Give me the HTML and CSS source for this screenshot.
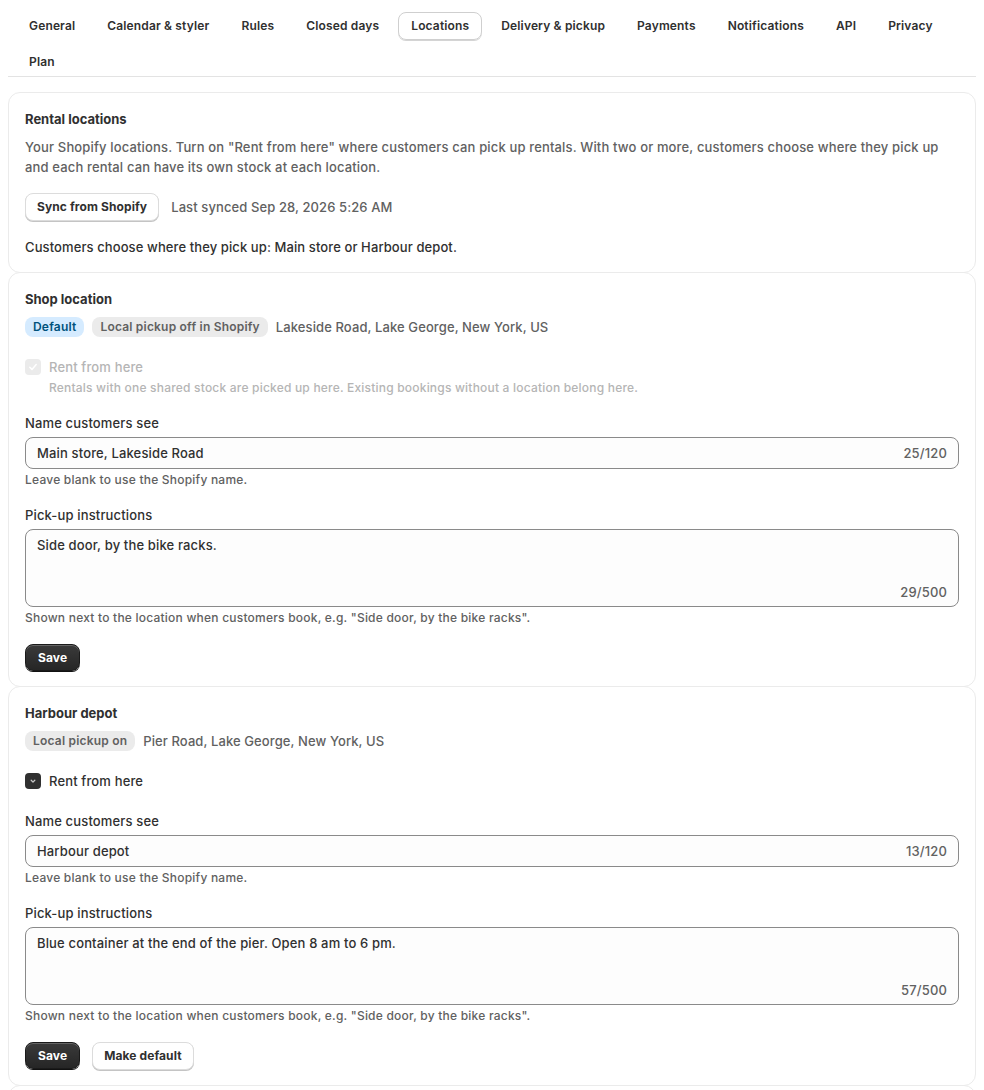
FILE: index.html
```html
<!DOCTYPE html>
<html lang="en">
<head>
<meta charset="utf-8">
<title>Locations</title>
<link rel="stylesheet" href="styles.css">
</head>
<body>
<div class="page">
  <nav class="tabs">
    <span class="tab">General</span>
    <span class="tab">Calendar &amp; styler</span>
    <span class="tab">Rules</span>
    <span class="tab">Closed days</span>
    <span class="tab tab-active">Locations</span>
    <span class="tab">Delivery &amp; pickup</span>
    <span class="tab">Payments</span>
    <span class="tab">Notifications</span>
    <span class="tab">API</span>
    <span class="tab">Privacy</span>
    <span class="tab">Plan</span>
  </nav>

  <div class="cards">
    <section class="card">
      <h2 class="title">Rental locations</h2>
      <p class="desc">Your Shopify locations. Turn on "Rent from here" where customers can pick up rentals. With two or more, customers choose where they pick up and each rental can have its own stock at each location.</p>
      <div class="sync-row">
        <button class="btn">Sync from Shopify</button>
        <span class="muted">Last synced Sep 28, 2026 5:26 AM</span>
      </div>
      <p class="summary">Customers choose where they pick up: Main store or Harbour depot.</p>
    </section>

    <section class="card">
      <h2 class="title">Shop location</h2>
      <div class="badges">
        <span class="badge badge-info">Default</span>
        <span class="badge">Local pickup off in Shopify</span>
        <span class="address">Lakeside Road, Lake George, New York, US</span>
      </div>
      <div class="check check-disabled">
        <span class="box box-disabled">
          <svg width="16" height="16" viewBox="0 0 16 16"><path d="M4.8 8.3l2.2 2.1 4.2-4.8" fill="none" stroke="#fff" stroke-width="1.5" stroke-linecap="round" stroke-linejoin="round"/></svg>
        </span>
        <div class="check-text">
          <span class="check-label">Rent from here</span>
          <span class="check-help">Rentals with one shared stock are picked up here. Existing bookings without a location belong here.</span>
        </div>
      </div>
      <div class="field field-after-help">
        <label class="label">Name customers see</label>
        <div class="input"><span>Main store, Lakeside Road</span><span class="count">25/120</span></div>
        <p class="help">Leave blank to use the Shopify name.</p>
      </div>
      <div class="field">
        <label class="label">Pick-up instructions</label>
        <div class="textarea"><span>Side door, by the bike racks.</span><span class="count">29/500</span></div>
        <p class="help">Shown next to the location when customers book, e.g. "Side door, by the bike racks".</p>
      </div>
      <div class="actions">
        <button class="btn btn-primary">Save</button>
      </div>
    </section>

    <section class="card">
      <h2 class="title">Harbour depot</h2>
      <div class="badges">
        <span class="badge">Local pickup on</span>
        <span class="address">Pier Road, Lake George, New York, US</span>
      </div>
      <div class="check">
        <span class="box box-checked">
          <svg width="16" height="16" viewBox="0 0 16 16"><path d="M6.2 7.3l1.8 1.8 1.8-1.8" fill="none" stroke="#c8c8c8" stroke-width="1.3" stroke-linecap="round" stroke-linejoin="round"/></svg>
        </span>
        <div class="check-text">
          <span class="check-label label-on">Rent from here</span>
        </div>
      </div>
      <div class="field field-after-check">
        <label class="label">Name customers see</label>
        <div class="input"><span>Harbour depot</span><span class="count">13/120</span></div>
        <p class="help">Leave blank to use the Shopify name.</p>
      </div>
      <div class="field">
        <label class="label">Pick-up instructions</label>
        <div class="textarea"><span>Blue container at the end of the pier. Open 8 am to 6 pm.</span><span class="count">57/500</span></div>
        <p class="help">Shown next to the location when customers book, e.g. "Side door, by the bike racks".</p>
      </div>
      <div class="actions">
        <button class="btn btn-primary">Save</button>
        <button class="btn">Make default</button>
      </div>
    </section>

    <section class="card card-more"></section>
  </div>
</div>
</body>
</html>
```

FILE: styles.css
```css
* { box-sizing: border-box; }

html, body {
  margin: 0;
  padding: 0;
  background: #ffffff;
}

body {
  font-family: Inter, "Noto Sans", "Liberation Sans", sans-serif;
  font-size: 13px;
  line-height: 20px;
  font-weight: 450;
  letter-spacing: 0.15px;
  color: #303030;
}

.page {
  padding: 12px 8px 0;
}

.tabs {
  display: flex;
  flex-wrap: wrap;
  column-gap: 6px;
  row-gap: 8px;
  padding: 0 8px;
  border-bottom: 1px solid #e3e3e3;
}

.tab {
  display: inline-flex;
  align-items: center;
  height: 28px;
  padding: 0 12px;
  border: 1px solid transparent;
  border-radius: 8px;
  font-size: 12px;
  font-weight: 600;
  letter-spacing: 0.15px;
  color: #303030;
  white-space: nowrap;
}

.tab-active {
  border-color: #cfcfcf;
  box-shadow: 0 1px 0 #d4d4d4;
}

.cards {
  margin-top: 15px;
  display: flex;
  flex-direction: column;
}

.card {
  border: 1px solid #ebebeb;
  border-radius: 12px;
  padding: 16px 16px 15px;
  background: #fff;
  display: flex;
  flex-direction: column;
}

.card + .card {
  margin-top: -1px;
}

.card-more {
  min-height: 60px;
}

.title {
  margin: 0;
  font-size: 13px;
  line-height: 20px;
  font-weight: 650;
  letter-spacing: 0;
}

.desc {
  margin: 8px 0 0;
  color: #616161;
}

.sync-row {
  display: flex;
  align-items: center;
  gap: 12px;
  margin-top: 16px;
}

.muted {
  color: #616161;
  letter-spacing: 0.1px;
}

.summary {
  margin: 16px 0 0;
  font-weight: 550;
  letter-spacing: 0.1px;
}

.btn {
  font: inherit;
  font-weight: 650;
  font-size: 12px;
  letter-spacing: 0.1px;
  color: #303030;
  height: 28px;
  padding: 0 11px;
  border-radius: 8px;
  border: 1px solid #dcdcdc;
  background: #fff;
  box-shadow: 0 1px 0 #c4c4c4;
  cursor: pointer;
}

.btn-primary {
  color: #fff;
  border: 1px solid #1a1a1a;
  background: linear-gradient(#3a3a3a, #262626);
  box-shadow: inset 0 1px 0 rgba(255,255,255,0.22), 0 1px 0 #111;
  height: 27px;
  padding: 0 12px;
}

.badges {
  display: flex;
  align-items: center;
  gap: 8px;
  margin-top: 8px;
}

.badge {
  display: inline-flex;
  align-items: center;
  height: 20px;
  padding: 0 8px;
  border-radius: 8px;
  background: #ebebeb;
  color: #616161;
  font-weight: 600;
  font-size: 12px;
  letter-spacing: 0.2px;
}

.badge-info {
  background: #d5ebff;
  color: #00527c;
}

.address {
  color: #616161;
  letter-spacing: 0.1px;
}

.check {
  display: flex;
  gap: 8px;
  margin-top: 20px;
}

.box {
  flex: none;
  width: 16px;
  height: 16px;
  border-radius: 4px;
  margin-top: 2px;
  display: block;
}

.box svg { display: block; }

.box-disabled { background: #ebebeb; }

.box-checked { background: #303030; }

.check-text {
  display: flex;
  flex-direction: column;
}

.check-label { color: #b5b5b5; }
.label-on { color: #303030; }

.check-help {
  color: #b5b5b5;
  font-size: 12px;
  line-height: 20px;
  letter-spacing: 0.2px;
  margin-top: 1px;
}

.field {
  display: flex;
  flex-direction: column;
  margin-top: 15px;
}

.field-after-help { margin-top: 15px; }
.field-after-check { margin-top: 20px; }

.label {
  line-height: 20px;
}

.input {
  margin-top: 4px;
  height: 32px;
  border: 1px solid #8a8a8a;
  border-radius: 8px;
  background: #fdfdfd;
  display: flex;
  align-items: center;
  justify-content: space-between;
  padding: 0 11px;
}

.textarea {
  margin-top: 4px;
  height: 78px;
  border: 1px solid #8a8a8a;
  border-radius: 8px;
  background: #fdfdfd;
  display: flex;
  flex-direction: column;
  justify-content: space-between;
  padding: 5px 11px 4px;
}

.count {
  color: #616161;
  align-self: flex-end;
}

.input .count { align-self: center; }

.help {
  margin: 1px 0 0;
  font-size: 12px;
  line-height: 20px;
  letter-spacing: 0.22px;
  color: #616161;
}

.actions {
  display: flex;
  gap: 12px;
  margin-top: 16px;
}
```
